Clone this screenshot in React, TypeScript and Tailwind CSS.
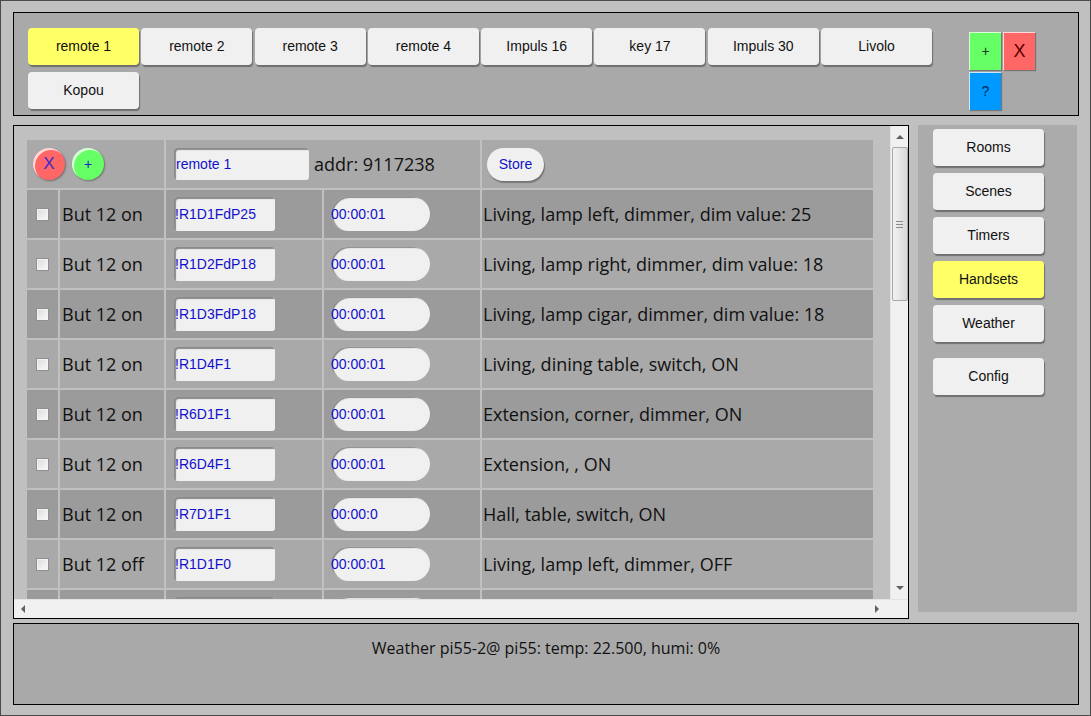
import React from "react";

const handsets = ["remote 1", "remote 2", "remote 3", "remote 4", "Impuls 16", "key 17", "Impuls 30", "Livolo", "Kopou"];

const rows = [
  { label: "But 12 on", code: "!R1D1FdP25", time: "00:00:01", desc: "Living, lamp left, dimmer, dim value: 25" },
  { label: "But 12 on", code: "!R1D2FdP18", time: "00:00:01", desc: "Living, lamp right, dimmer, dim value: 18" },
  { label: "But 12 on", code: "!R1D3FdP18", time: "00:00:01", desc: "Living, lamp cigar, dimmer, dim value: 18" },
  { label: "But 12 on", code: "!R1D4F1", time: "00:00:01", desc: "Living, dining table, switch, ON" },
  { label: "But 12 on", code: "!R6D1F1", time: "00:00:01", desc: "Extension, corner, dimmer, ON" },
  { label: "But 12 on", code: "!R6D4F1", time: "00:00:01", desc: "Extension, , ON" },
  { label: "But 12 on", code: "!R7D1F1", time: "00:00:0", desc: "Hall, table, switch, ON" },
  { label: "But 12 off", code: "!R1D1F0", time: "00:00:01", desc: "Living, lamp left, dimmer, OFF" },
  // last row sits under the scrollbar, only its top edge shows
  { label: "", code: "", time: "", desc: "" },
];

const menu = ["Rooms", "Scenes", "Timers", "Handsets", "Weather"];

const comic = "font-['Comic_Sans_MS','Open_Sans',sans-serif]";

function GrayButton({ label, active }: { label: string; active?: boolean }) {
  return (
    <button
      className={`w-[111px] h-[37px] rounded-[4px] text-[14px] text-[#111] shadow-[1px_2px_1px_rgba(0,0,0,0.35)] ${
        active ? "bg-[#ffff66]" : "bg-[#f0f0f0]"
      }`}
    >
      {label}
    </button>
  );
}

function Arrow({ dir }: { dir: "up" | "down" | "left" | "right" }) {
  const pts = {
    up: "0,5 4,1 8,5",
    down: "0,1 8,1 4,5",
    left: "5,0 5,8 1,4",
    right: "1,0 1,8 5,4",
  }[dir];
  const vertical = dir === "up" || dir === "down";
  return (
    <svg viewBox={vertical ? "0 0 8 6" : "0 0 6 8"} className={vertical ? "w-[8px] h-[6px]" : "w-[6px] h-[8px]"}>
      <polygon points={pts} fill="#606060" />
    </svg>
  );
}

function Checkbox() {
  return (
    <div className="w-[13px] h-[13px] border border-[#8e8f8f] bg-gradient-to-br from-[#dcdcdc] to-[#fbfbfb] shadow-[inset_0_0_0_1px_#f4f4f4]" />
  );
}

export default function App() {
  return (
    <div className="w-[1091px] h-[716px] bg-[#c0c0c0] border border-[#4a4a4a] overflow-hidden font-['Liberation_Sans',Arial,sans-serif]">
      {/* handset selector */}
      <div className="mt-[11px] ml-[12px] w-[1066px] h-[104px] border border-black bg-[#a9a9a9] flex">
        <div className="w-[955px] pl-[14px] pt-[15px] flex flex-wrap content-start gap-x-[2.3px] gap-y-[7px]">
          {handsets.map((h, i) => (
            <GrayButton key={h} label={h} active={i === 0} />
          ))}
        </div>
        <div className="pt-[19px] grid grid-cols-[32px_32px] gap-[2px] content-start">
          <button className="h-[38px] bg-[#66ff66] text-[#1c3a1c] text-[14px] border-t border-l border-[#d8ffd8] shadow-[1px_1px_1px_rgba(0,0,0,0.3)]">
            +
          </button>
          <button className="h-[38px] bg-[#ff6666] text-[#5a0000] text-[18px] border-t border-l border-[#ffd8d8] shadow-[1px_1px_1px_rgba(0,0,0,0.3)]">
            X
          </button>
          <button className="h-[38px] bg-[#0099ff] text-[#002a5a] text-[14px] border-t border-l border-[#cce8ff] shadow-[1px_1px_1px_rgba(0,0,0,0.3)]">
            ?
          </button>
        </div>
      </div>

      <div className="flex mt-[9px] ml-[12px]">
        {/* handset editor */}
        <div className="w-[896px] h-[494px] border border-black bg-[#c0c0c0] flex flex-col">
          <div className="flex flex-1 min-h-0">
            <div className="flex-1 overflow-hidden pl-[13px] pt-[14px]">
              <div className="grid grid-cols-[31px_104px_156px_156px_391px] auto-rows-[48px] gap-[2px]">
                <div className="col-span-2 bg-[#a9a9a9] flex items-center gap-[7px] pl-[6px]">
                  <button className="w-[32px] h-[32px] rounded-full bg-[#ff6666] text-[#3a2ad0] text-[17px] shadow-[inset_2px_2px_0_rgba(255,255,255,0.75),1px_1px_2px_rgba(0,0,0,0.35)]">
                    X
                  </button>
                  <button className="w-[32px] h-[32px] rounded-full bg-[#66ff66] text-[#1a1ad0] text-[14px] shadow-[inset_2px_2px_0_rgba(255,255,255,0.75),1px_1px_2px_rgba(0,0,0,0.35)]">
                    +
                  </button>
                </div>
                <div className="col-span-2 bg-[#a9a9a9] flex items-center pl-[8px]">
                  <input
                    readOnly
                    value="remote 1"
                    className="w-[135px] h-[32px] bg-[#f0f0f0] rounded-[3px] px-[2px] text-[14px] text-[#1010cc] outline-none shadow-[inset_2px_2px_1px_#8a8a8a]"
                  />
                  <span className={`ml-[5px] text-[18px] text-[#111] ${comic}`}>addr: 9117238</span>
                </div>
                <div className="bg-[#a9a9a9] flex items-center pl-[5px]">
                  <button className="w-[57px] h-[33px] rounded-full bg-[#f0f0f0] text-[14px] text-[#1010cc] shadow-[1px_2px_1px_rgba(0,0,0,0.3)]">
                    Store
                  </button>
                </div>

                {rows.map((r, i) => {
                  const bg = i % 2 === 0 ? "bg-[#9b9b9b]" : "bg-[#a9a9a9]";
                  return (
                    <React.Fragment key={i}>
                      <div className={`${bg} flex items-center justify-center`}>
                        <Checkbox />
                      </div>
                      <div className={`${bg} flex items-center pl-[2px] text-[18px] text-[#111] ${comic}`}>
                        {r.label}
                      </div>
                      <div className={`${bg} flex items-center pl-[8px]`}>
                        <input
                          readOnly
                          value={r.code}
                          className="w-[101px] h-[34px] bg-[#f0f0f0] rounded-[3px] px-[1px] text-[14px] text-[#1010cc] outline-none shadow-[inset_2px_2px_1px_#8a8a8a]"
                        />
                      </div>
                      <div className={`${bg} flex items-center pl-[7px]`}>
                        <input
                          readOnly
                          value={r.time}
                          className="w-[99px] h-[34px] bg-[#f0f0f0] rounded-full px-0 text-[14px] text-[#1010cc] outline-none shadow-[inset_2px_1px_1px_#8a8a8a]"
                        />
                      </div>
                      <div className={`${bg} flex items-center pl-[1px] text-[18px] text-[#111] ${comic}`}>
                        {r.desc}
                      </div>
                    </React.Fragment>
                  );
                })}
              </div>
            </div>
            {/* vertical scrollbar */}
            <div className="w-[18px] bg-[#f0f0f0] border-l border-[#e4e4e4] flex flex-col items-center">
              <div className="h-[21px] flex items-center justify-center">
                <Arrow dir="up" />
              </div>
              <div className="w-[16px] h-[154px] rounded-[2px] border border-[#a8a8a8] bg-gradient-to-r from-[#f2f2f2] to-[#d8d8d8] flex flex-col items-center justify-center gap-[2px]">
                <div className="w-[7px] h-px bg-[#8c8c8c]" />
                <div className="w-[7px] h-px bg-[#8c8c8c]" />
                <div className="w-[7px] h-px bg-[#8c8c8c]" />
              </div>
              <div className="flex-1" />
              <div className="h-[22px] flex items-center justify-center">
                <Arrow dir="down" />
              </div>
            </div>
          </div>
          {/* horizontal scrollbar */}
          <div className="h-[19px] flex border-t border-[#e4e4e4]">
            <div className="flex-1 bg-[#f0f0f0] flex items-center justify-between pl-[6px] pr-[10px]">
              <Arrow dir="left" />
              <Arrow dir="right" />
            </div>
            <div className="w-[18px] bg-[#f0f0f0]" />
          </div>
        </div>

        {/* main menu */}
        <div className="ml-[9px] w-[159px] h-[487px] bg-[#ababab] pl-[15px] pt-[4px] flex flex-col gap-[7px]">
          {menu.map((m) => (
            <GrayButton key={m} label={m} active={m === "Handsets"} />
          ))}
          <div className="mt-[9px]">
            <GrayButton label="Config" />
          </div>
        </div>
      </div>

      {/* status */}
      <div className="mt-[4px] ml-[12px] w-[1066px] h-[82px] border border-black bg-[#a9a9a9] pt-[12px] text-center">
        <span className={`text-[16px] leading-[24px] text-[#111] ${comic}`}>
          Weather pi55-2@ pi55: temp: 22.500, humi: 0%
        </span>
      </div>
    </div>
  );
}
